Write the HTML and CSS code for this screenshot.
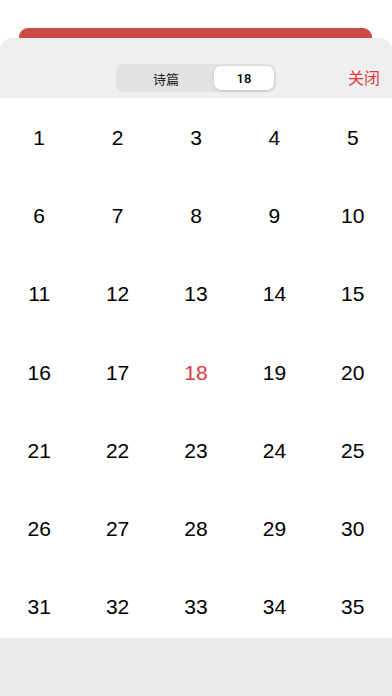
FILE: index.html
```html
<!DOCTYPE html>
<html lang="zh">
<head>
    <meta charset="UTF-8">
    <meta name="viewport" content="width=device-width, initial-scale=1">
    <title>诗篇</title>
    <link rel="stylesheet" href="styles.css">
</head>
<body>
    <div class="top-space">
        <div class="red-bar"></div>
    </div>

    <div class="sheet">
        <div class="sheet-head">
            <div class="segment">
                <div class="seg-item">诗篇</div>
                <div class="seg-item active">18</div>
            </div>
            <a href="#" class="close">关闭</a>
        </div>

        <div class="grid-wrap">
            <div class="grid">
                <div class="cell">1</div>
                <div class="cell">2</div>
                <div class="cell">3</div>
                <div class="cell">4</div>
                <div class="cell">5</div>
                <div class="cell">6</div>
                <div class="cell">7</div>
                <div class="cell">8</div>
                <div class="cell">9</div>
                <div class="cell">10</div>
                <div class="cell">11</div>
                <div class="cell">12</div>
                <div class="cell">13</div>
                <div class="cell">14</div>
                <div class="cell">15</div>
                <div class="cell">16</div>
                <div class="cell">17</div>
                <div class="cell current">18</div>
                <div class="cell">19</div>
                <div class="cell">20</div>
                <div class="cell">21</div>
                <div class="cell">22</div>
                <div class="cell">23</div>
                <div class="cell">24</div>
                <div class="cell">25</div>
                <div class="cell">26</div>
                <div class="cell">27</div>
                <div class="cell">28</div>
                <div class="cell">29</div>
                <div class="cell">30</div>
                <div class="cell">31</div>
                <div class="cell">32</div>
                <div class="cell">33</div>
                <div class="cell">34</div>
                <div class="cell">35</div>
            </div>
        </div>

        <div class="sheet-foot"></div>
    </div>
</body>
</html>
```

FILE: styles.css
```css
*{
    margin: 0;
    padding: 0;
    box-sizing: border-box;
}

html, body{
    height: 100%;
}

body{
    font-family: "Liberation Sans", "Noto Sans CJK SC", sans-serif;
    background-color: #fff;
    display: flex;
    flex-direction: column;
    overflow: hidden;
}

.top-space{
    height: 38px;
    padding: 28px 20px 0 19px;
    flex-shrink: 0;
}

.red-bar{
    height: 10px;
    background-color: #cc4a45;
    border-radius: 9px 9px 0 0;
}

.sheet{
    flex: 1;
    display: flex;
    flex-direction: column;
    background-color: #efefef;
    border-radius: 12px 12px 0 0;
    overflow: hidden;
}

.sheet-head{
    height: 60px;
    flex-shrink: 0;
    position: relative;
    display: flex;
    justify-content: center;
    padding-top: 26px;
}

.segment{
    display: flex;
    width: 160px;
    height: 28px;
    padding: 2px;
    background-color: #e2e2e2;
    border-radius: 8px;
}

.seg-item{
    flex: 1;
    display: flex;
    justify-content: center;
    align-items: center;
    font-family: "Noto Sans CJK SC", sans-serif;
    font-size: 13px;
    color: #222;
}

.seg-item.active{
    flex: 0 0 60px;
    background-color: #fff;
    border-radius: 7px;
    font-family: "Roboto", sans-serif;
    font-weight: 500;
    color: #000;
    box-shadow: 0 1px 3px rgba(0,0,0,.15);
}

.close{
    position: absolute;
    right: 12px;
    top: 29px;
    font-family: "Noto Sans CJK SC", sans-serif;
    font-size: 16px;
    line-height: 20px;
    color: #df3a3e;
    text-decoration: none;
}

.grid-wrap{
    height: 540px;
    flex-shrink: 0;
    background-color: #fff;
    overflow: hidden;
}

.grid{
    display: grid;
    grid-template-columns: repeat(5, 1fr);
    grid-auto-rows: 78.2px;
    padding-top: 1px;
}

.cell{
    display: flex;
    justify-content: center;
    align-items: center;
    font-size: 21px;
    color: #000;
}

.cell.current{
    color: #df3a3e;
}

.sheet-foot{
    flex: 1;
    background-color: #ebebeb;
}
```
